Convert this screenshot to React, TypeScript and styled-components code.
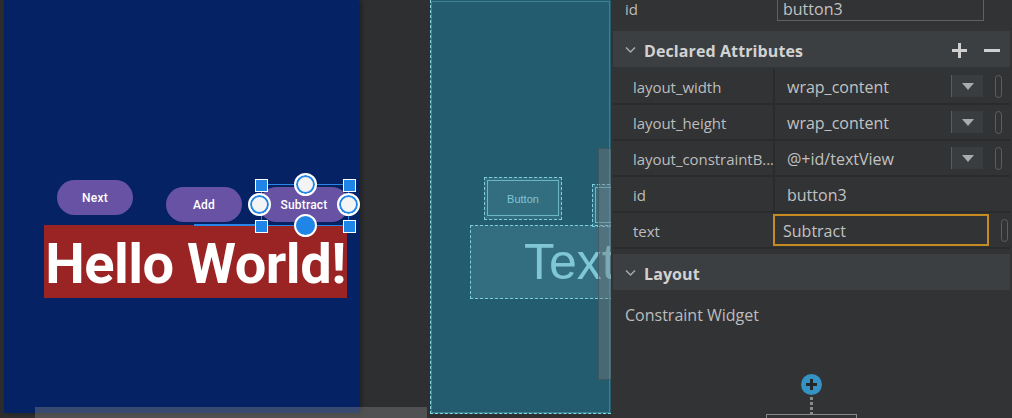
import React from "react";
import styled, { createGlobalStyle } from "styled-components";

const GlobalStyle = createGlobalStyle`
  html, body { margin: 0; padding: 0; width: 1012px; height: 418px; overflow: hidden; background: #2e2f31; }
  #root { width: 1012px; height: 418px; }
  * { box-sizing: border-box; }
`;

const Page = styled.div`
  display: flex;
  width: 1012px;
  height: 418px;
  overflow: hidden;
`;

/* ---------- design canvas ---------- */
const Canvas = styled.div`
  position: relative;
  flex: 0 0 611px;
  display: flex;
  align-items: flex-start;
  height: 418px;
  overflow: hidden;
  background: #2e2f31;
`;

const LeftEdge = styled.div`
  flex: 0 0 4px;
  height: 418px;
  background: #2b2d2f;
`;

const DesignScreen = styled.div`
  position: relative;
  flex: 0 0 355px;
  height: 413px;
  background: #052364;
  box-shadow: 2px 0 5px rgba(0, 0, 0, 0.4);
  font-family: Roboto, "Liberation Sans", sans-serif;
  z-index: 1;
`;

const CanvasGap = styled.div`
  flex: 0 0 71px;
`;

const Blueprint = styled.div`
  position: relative;
  flex: 1;
  height: 414px;
  background: #235c6e;
  border-left: 1px dashed #86d6e4;
  border-bottom: 1px dashed #86d6e4;
  outline: 1px solid rgba(110, 200, 215, 0.35);
  outline-offset: -2px;
  font-family: "Liberation Sans", Arial, sans-serif;
  overflow: hidden;
`;

const HScroll = styled.div`
  position: absolute;
  left: 35px;
  bottom: 0;
  width: 392px;
  height: 11px;
  background: rgba(128, 128, 128, 0.42);
  z-index: 2;
`;

/* widgets on the design screen (free canvas) */
const PillButton = styled.div<{ $x: number; $y: number; $w: number }>`
  position: absolute;
  left: ${(p) => p.$x}px;
  top: ${(p) => p.$y}px;
  width: ${(p) => p.$w}px;
  height: 35px;
  border-radius: 18px;
  background: #6852a3;
  color: #ffffff;
  font-size: 12px;
  font-weight: 500;
  display: flex;
  align-items: center;
  justify-content: center;
  letter-spacing: 0.2px;
`;

const HelloBox = styled.div`
  position: absolute;
  left: 40px;
  top: 225px;
  width: 303px;
  height: 73px;
  padding-top: 4px;
  background: #9a2424;
  color: #ffffff;
  font-size: 56px;
  font-weight: 700;
  display: flex;
  align-items: center;
  justify-content: center;
  line-height: 1;
  letter-spacing: -0.5px;
  white-space: nowrap;
`;

const ConstraintLine = styled.div`
  position: absolute;
  left: 190px;
  top: 224px;
  width: 70px;
  height: 2px;
  background: #2a86e6;
`;

const SelectionRect = styled.div`
  position: absolute;
  left: 257px;
  top: 184px;
  width: 88px;
  height: 42px;
  border: 1.5px solid #2a86e6;
`;

const SquareHandle = styled.div<{ $cx: number; $cy: number }>`
  position: absolute;
  left: ${(p) => p.$cx - 6.5}px;
  top: ${(p) => p.$cy - 6.5}px;
  width: 13px;
  height: 13px;
  background: #1f86e8;
  border: 1.5px solid #ffffff;
`;

const CircleHandle = styled.div<{ $cx: number; $cy: number; $filled?: boolean }>`
  position: absolute;
  left: ${(p) => p.$cx - 11.5}px;
  top: ${(p) => p.$cy - 11.5}px;
  width: 23px;
  height: 23px;
  border-radius: 50%;
  background: ${(p) => (p.$filled ? "#1f86e8" : "#f4f4f4")};
  border: 2px solid #ffffff;
  box-shadow: inset 0 0 0 ${(p) => (p.$filled ? "0px" : "2px")} #1f86e8;
`;

/* blueprint elements */
const BpBox = styled.div<{ $x: number; $y: number; $w: number; $h: number }>`
  position: absolute;
  left: ${(p) => p.$x}px;
  top: ${(p) => p.$y}px;
  width: ${(p) => p.$w}px;
  height: ${(p) => p.$h}px;
  border: 1px dashed #7dcfdf;
  background: rgba(110, 175, 195, 0.22);
  display: flex;
  align-items: center;
  justify-content: center;
  color: #7fc6d6;
`;

const BpInner = styled.div`
  position: absolute;
  inset: 2px 2px 3px 2px;
  border: 1px solid rgba(125, 207, 223, 0.75);
`;

const BpButtonLabel = styled.span`
  font-size: 11px;
`;

const BpTextLabel = styled.span`
  font-size: 50px;
  white-space: nowrap;
  margin-left: 4px;
`;

const BpScroll = styled.div`
  position: absolute;
  left: 167px;
  top: 148px;
  width: 14px;
  height: 232px;
  background: rgba(125, 125, 125, 0.4);
  border: 1px solid rgba(60, 80, 85, 0.7);
`;

/* ---------- attributes panel ---------- */
const Panel = styled.div`
  flex: 1;
  height: 418px;
  background: #313335;
  padding: 0 2px;
  display: flex;
  flex-direction: column;
  font-family: "Open Sans", "Noto Sans", sans-serif;
  color: #bbbbbb;
  overflow: hidden;
`;

const TopRow = styled.div`
  display: grid;
  grid-template-columns: 164px 207px;
  height: 20px;
  margin-top: -4px;
  flex-shrink: 0;
`;

const TopLabel = styled.div`
  padding-left: 12px;
  font-size: 15px;
  line-height: 20px;
  padding-top: 3px;
`;

const TopField = styled.div`
  border: 1px solid #5e6062;
  height: 25px;
  padding: 3px 0 0 5px;
  font-size: 16px;
  line-height: 18px;
  color: #c2c2c2;
`;

const SectionHeader = styled.div<{ $mt: number }>`
  margin-top: ${(p) => p.$mt}px;
  height: 36px;
  background: #3c3f41;
  display: flex;
  align-items: center;
  padding: 2px 10px 0 12px;
  gap: 8px;
  flex-shrink: 0;
`;

const SectionTitle = styled.div`
  font-size: 16px;
  font-weight: 700;
  color: #d2d2d2;
  flex: 1;
  letter-spacing: 0.1px;
  padding-top: 1px;
`;

const HeaderTools = styled.div`
  display: flex;
  align-items: center;
  gap: 16px;
`;

const AttrList = styled.div`
  margin-top: 2px;
  display: flex;
  flex-direction: column;
  flex-shrink: 0;
`;

const AttrRow = styled.div`
  display: grid;
  grid-template-columns: 160px 1fr;
  height: 36px;
  border-bottom: 2px solid #292b2d;
  flex-shrink: 0;
`;

const AttrLabel = styled.div`
  padding-left: 20px;
  padding-top: 1px;
  font-size: 15px;
  display: flex;
  align-items: center;
  white-space: nowrap;
  overflow: hidden;
  letter-spacing: -0.05px;
  color: #bdbdbd;
`;

const AttrValue = styled.div<{ $boxed?: boolean }>`
  display: flex;
  align-items: center;
  border-left: ${(p) => (p.$boxed ? "none" : "2px solid #292b2d")};
  padding-left: ${(p) => (p.$boxed ? "0" : "12px")};
  padding-right: 8px;
  font-size: 16px;
  color: #c2c2c2;
`;

const EditBox = styled.div`
  flex: 0 0 216px;
  height: 32px;
  border: 2px solid #c68a22;
  padding-left: 8px;
  padding-top: 1px;
  display: flex;
  align-items: center;
`;

const ValueText = styled.span`
  flex: 1;
  white-space: nowrap;
  padding-top: 2px;
`;

const DropButton = styled.div`
  width: 32px;
  height: 22px;
  background: #3a3d3f;
  border-left: 1px solid #5a5c5e;
  display: flex;
  align-items: center;
  justify-content: center;
`;

const Triangle = styled.div`
  width: 0;
  height: 0;
  border-left: 6px solid transparent;
  border-right: 6px solid transparent;
  border-top: 7px solid #a9abad;
`;

const Pill = styled.div`
  width: 7px;
  height: 23px;
  margin-left: 12px;
  border: 1.5px solid #5d5f61;
  border-radius: 4px;
`;

const PillSpacer = styled.div`
  flex: 1;
`;

const PlainLine = styled.div`
  padding-left: 12px;
  margin-top: 15px;
  font-size: 16px;
  line-height: 20px;
  color: #bdbdbd;
`;

const Widget = styled.div`
  margin-top: 49px;
  display: flex;
  flex-direction: column;
  align-items: center;
`;

const AddCircle = styled.div`
  width: 21px;
  height: 21px;
  border-radius: 50%;
  background: #3592c4;
  display: flex;
  align-items: center;
  justify-content: center;
`;

const DottedStem = styled.div`
  width: 3px;
  height: 17px;
  margin-top: 2px;
  background: repeating-linear-gradient(to bottom, #8a8a8a 0 3px, transparent 3px 5px);
`;

const WidgetBox = styled.div`
  width: 91px;
  height: 20px;
  border: 1.5px solid #8a8a8a;
`;

const Chevron = () => (
  <svg width="11" height="8" viewBox="0 0 11 8">
    <path d="M1 1.5 L5.5 6 L10 1.5" fill="none" stroke="#a8a8a8" strokeWidth="1.5" />
  </svg>
);

const PlusIcon = () => (
  <svg width="17" height="17" viewBox="0 0 17 17">
    <path d="M8.5 1 V16 M1 8.5 H16" stroke="#cfcfcf" strokeWidth="3" />
  </svg>
);

const MinusIcon = () => (
  <svg width="16" height="17" viewBox="0 0 16 17">
    <path d="M0 8.5 H16" stroke="#cfcfcf" strokeWidth="3" />
  </svg>
);

type Attr = { label: string; value: string; drop?: boolean; pill?: boolean; boxed?: boolean };

const attrs: Attr[] = [
  { label: "layout_width", value: "wrap_content", drop: true, pill: true },
  { label: "layout_height", value: "wrap_content", drop: true, pill: true },
  { label: "layout_constraintB...", value: "@+id/textView", drop: true, pill: true },
  { label: "id", value: "button3" },
  { label: "text", value: "Subtract", boxed: true, pill: true },
];

export default function App() {
  return (
    <>
      <GlobalStyle />
      <Page>
        <Canvas>
          <LeftEdge />
          <DesignScreen>
            <HelloBox>Hello World!</HelloBox>
            <ConstraintLine />
            <PillButton $x={53} $y={180} $w={76}>Next</PillButton>
            <PillButton $x={162} $y={187} $w={76}>Add</PillButton>
            <PillButton $x={255} $y={187} $w={90}>Subtract</PillButton>
            <SelectionRect />
            <SquareHandle $cx={257} $cy={185} />
            <SquareHandle $cx={345} $cy={185} />
            <SquareHandle $cx={257} $cy={226} />
            <SquareHandle $cx={345} $cy={226} />
            <CircleHandle $cx={301} $cy={184} />
            <CircleHandle $cx={255} $cy={204} />
            <CircleHandle $cx={344} $cy={204} />
            <CircleHandle $cx={301} $cy={225} $filled />
          </DesignScreen>
          <CanvasGap />
          <Blueprint>
            <BpBox $x={53} $y={177} $w={78} $h={43}>
              <BpInner />
              <BpButtonLabel>Button</BpButtonLabel>
            </BpBox>
            <BpBox $x={161} $y={184} $w={78} $h={43}>
              <BpInner />
            </BpBox>
            <BpBox $x={39} $y={225} $w={303} $h={74}>
              <BpTextLabel>TextView</BpTextLabel>
            </BpBox>
            <BpScroll />
          </Blueprint>
          <HScroll />
        </Canvas>

        <Panel>
          <TopRow>
            <TopLabel>id</TopLabel>
            <TopField>button3</TopField>
          </TopRow>

          <SectionHeader $mt={15}>
            <Chevron />
            <SectionTitle>Declared Attributes</SectionTitle>
            <HeaderTools>
              <PlusIcon />
              <MinusIcon />
            </HeaderTools>
          </SectionHeader>

          <AttrList>
            {attrs.map((a) => (
              <AttrRow key={a.label}>
                <AttrLabel>{a.label}</AttrLabel>
                <AttrValue $boxed={a.boxed}>
                  {a.boxed ? (
                    <EditBox>{a.value}</EditBox>
                  ) : (
                    <ValueText>{a.value}</ValueText>
                  )}
                  {a.drop && (
                    <DropButton>
                      <Triangle />
                    </DropButton>
                  )}
                  {a.boxed && <PillSpacer />}
                  {a.pill && <Pill />}
                </AttrValue>
              </AttrRow>
            ))}
          </AttrList>

          <SectionHeader $mt={5}>
            <Chevron />
            <SectionTitle>Layout</SectionTitle>
          </SectionHeader>

          <PlainLine>Constraint Widget</PlainLine>

          <Widget>
            <AddCircle>
              <svg width="13" height="13" viewBox="0 0 13 13">
                <path d="M6.5 1 V12 M1 6.5 H12" stroke="#24282b" strokeWidth="3" />
              </svg>
            </AddCircle>
            <DottedStem />
            <WidgetBox />
          </Widget>
        </Panel>
      </Page>
    </>
  );
}
